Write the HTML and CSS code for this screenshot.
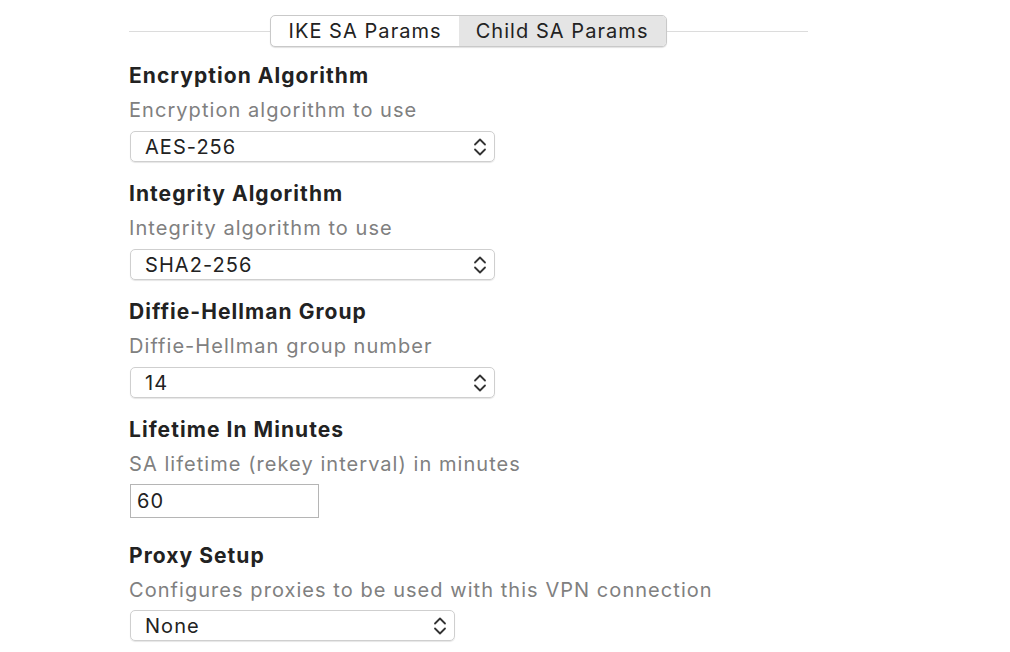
FILE: index.html
```html
<!DOCTYPE html>
<html lang="en">
<head>
    <meta charset="UTF-8">
    <title>Child SA Params</title>
    <link rel="stylesheet" href="styles.css">
</head>
<body>
    <div class="pane">
        <div class="tabs">
            <div class="tab-group">
                <div class="tab">IKE SA Params</div>
                <div class="tab selected">Child SA Params</div>
            </div>
        </div>

        <div class="field">
            <div class="label">Encryption Algorithm</div>
            <div class="desc">Encryption algorithm to use</div>
            <div class="popup">
                <span>AES-256</span>
                <svg class="arrows" width="16" height="20" viewBox="0 0 16 20"><path d="M3 7.5 L8 2.5 L13 7.5 M3 12.5 L8 17.5 L13 12.5" fill="none" stroke="#333" stroke-width="1.8" stroke-linecap="round" stroke-linejoin="round"/></svg>
            </div>
        </div>

        <div class="field">
            <div class="label">Integrity Algorithm</div>
            <div class="desc">Integrity algorithm to use</div>
            <div class="popup">
                <span>SHA2-256</span>
                <svg class="arrows" width="16" height="20" viewBox="0 0 16 20"><path d="M3 7.5 L8 2.5 L13 7.5 M3 12.5 L8 17.5 L13 12.5" fill="none" stroke="#333" stroke-width="1.8" stroke-linecap="round" stroke-linejoin="round"/></svg>
            </div>
        </div>

        <div class="field">
            <div class="label">Diffie-Hellman Group</div>
            <div class="desc">Diffie-Hellman group number</div>
            <div class="popup">
                <span>14</span>
                <svg class="arrows" width="16" height="20" viewBox="0 0 16 20"><path d="M3 7.5 L8 2.5 L13 7.5 M3 12.5 L8 17.5 L13 12.5" fill="none" stroke="#333" stroke-width="1.8" stroke-linecap="round" stroke-linejoin="round"/></svg>
            </div>
        </div>

        <div class="field spaced">
            <div class="label">Lifetime In Minutes</div>
            <div class="desc short">SA lifetime (rekey interval) in minutes</div>
            <div class="textbox">60</div>
        </div>

        <div class="field">
            <div class="label">Proxy Setup</div>
            <div class="desc short">Configures proxies to be used with this VPN connection</div>
            <div class="popup narrow">
                <span>None</span>
                <svg class="arrows" width="16" height="20" viewBox="0 0 16 20"><path d="M3 7.5 L8 2.5 L13 7.5 M3 12.5 L8 17.5 L13 12.5" fill="none" stroke="#333" stroke-width="1.8" stroke-linecap="round" stroke-linejoin="round"/></svg>
            </div>
        </div>
    </div>
</body>
</html>
```

FILE: styles.css
```css
body {
    margin: 0;
    background-color: #fff;
    font-family: Inter, "Liberation Sans", Arial, sans-serif;
    letter-spacing: 1.05px;
    color: #222;
}
.pane {
    width: 679px;
    padding: 15px 0 0 129px;
}
.tabs {
    display: flex;
    justify-content: center;
    position: relative;
    margin-bottom: 17px;
}
.tabs::before {
    content: "";
    position: absolute;
    left: 0;
    right: 0;
    top: 16px;
    border-top: 1px solid #dcdcdc;
}
.tab-group {
    display: flex;
    position: relative;
    border: 1px solid #c9c9c9;
    border-radius: 5px;
    background-color: #fff;
    box-shadow: 0 1px 1px rgba(0, 0, 0, 0.12);
    overflow: hidden;
}
.tab {
    height: 30px;
    line-height: 30px;
    padding: 0 17px;
    font-size: 20px;
    color: #222;
}
.tab.selected {
    background-color: #e5e5e5;
}
.field {
    margin-bottom: 20px;
}
.field.spaced {
    margin-bottom: 26px;
}
.label {
    font-size: 21px;
    font-weight: 700;
    line-height: 24px;
    letter-spacing: 1.05px;
    color: #222;
}
.desc {
    font-size: 20px;
    line-height: 24px;
    color: #808080;
    margin-top: 10px;
    margin-bottom: 9px;
}
.desc.short {
    margin-bottom: 8px;
}
.popup {
    display: flex;
    align-items: center;
    justify-content: space-between;
    width: 365px;
    height: 31px;
    margin-left: 1px;
    padding: 0 6px 0 14px;
    box-sizing: border-box;
    border: 1px solid #cfcfcf;
    border-radius: 5px;
    box-shadow: 0 1px 1px rgba(0, 0, 0, 0.1);
    font-size: 20px;
    color: #222;
}
.popup.narrow {
    width: 325px;
}
.arrows {
    display: block;
}
.textbox {
    width: 189px;
    height: 34px;
    margin-left: 1px;
    box-sizing: border-box;
    border: 1px solid #b5b5b5;
    padding: 0 6px;
    line-height: 32px;
    font-size: 20px;
    color: #222;
}
```
